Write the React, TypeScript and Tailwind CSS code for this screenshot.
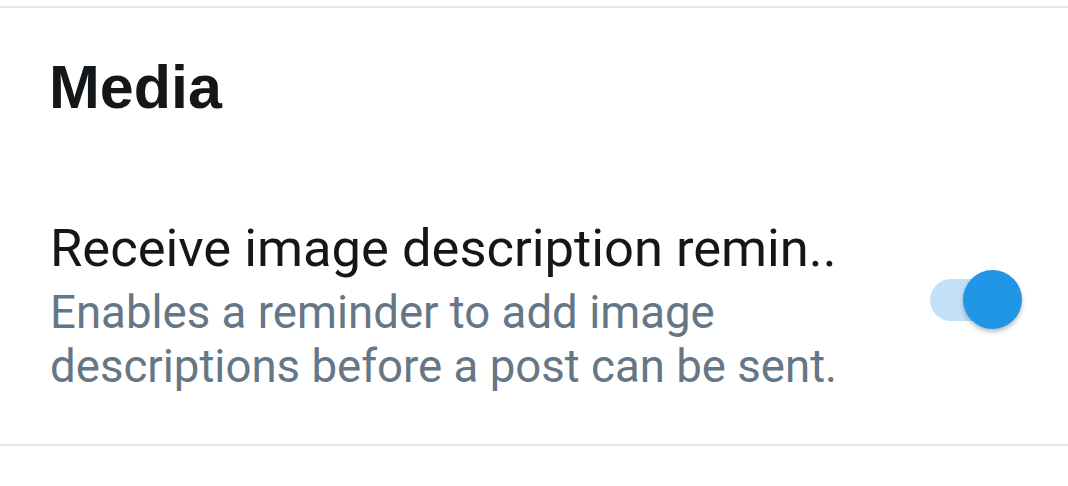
export default function App() {
  return (
    <div className="w-[1068px] h-[486px] bg-white overflow-hidden">
      <div className="h-[6px]" />
      <div className="h-[2px] bg-[#e8e8e8]" />
      <div className="pl-[49px] pt-[43px] h-[150px]">
        <h1
          className="text-[61px] leading-[72px] font-bold text-[#14171a]"
          style={{ fontFamily: '"Liberation Sans", Arial, sans-serif' }}
        >
          Media
        </h1>
      </div>
      <div className="flex items-center pl-[50px] pr-[46px] pt-[10px] h-[286px]">
        <div className="flex-1" style={{ fontFamily: 'Roboto, "Noto Sans", sans-serif' }}>
          <div className="text-[52.5px] leading-[60px] text-[#14171a]">Receive image description remin..</div>
          <div className="text-[45.6px] leading-[54px] text-[#657786] mt-[8px]">
            Enables a reminder to add image
            <br />
            descriptions before a post can be sent.
          </div>
        </div>
        <div className="relative w-[96px] h-[60px] shrink-0 mt-[-12px]">
          <div className="absolute left-[4px] top-[9px] w-[74px] h-[42px] rounded-full bg-[#c2e1f9]" />
          <div className="absolute right-[0px] top-0 w-[59px] h-[59px] rounded-full bg-[#2196e6] shadow-[0_3px_4px_rgba(0,0,0,0.25)]" />
        </div>
      </div>
      <div className="h-[2px] bg-[#e6e6e6]" />
    </div>
  );
}
